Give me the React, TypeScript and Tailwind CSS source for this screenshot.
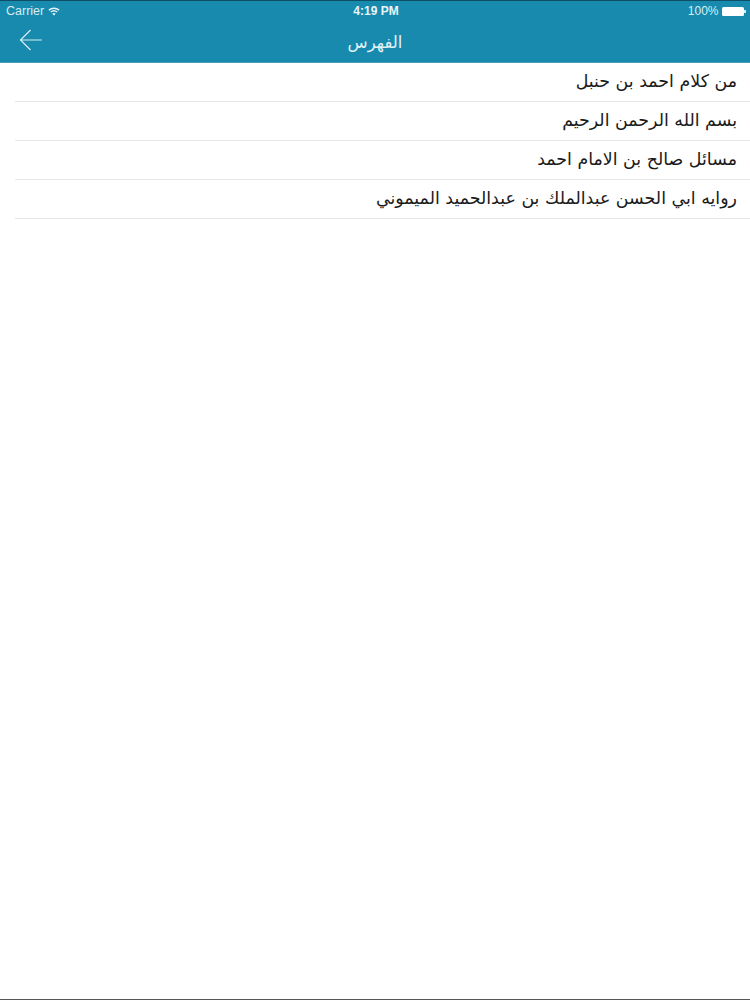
import React from "react";

const rows = [
  "من كلام احمد بن حنبل",
  "بسم الله الرحمن الرحيم",
  "مسائل صالح بن الامام احمد",
  "روايه ابي الحسن عبدالملك بن عبدالحميد الميموني",
];

const Wifi = () => (
  <svg width="12" height="9" viewBox="0 0 14 10" fill="none" stroke="#e4f2f7" strokeWidth="1.6">
    <path d="M1 3.4C4.4 .5 9.6 .5 13 3.4" />
    <path d="M3.2 5.6C5.4 3.8 8.6 3.8 10.8 5.6" />
    <path d="M7 9.6 5 7.5C6.2 6.6 7.8 6.6 9 7.5Z" fill="#e4f2f7" stroke="none" />
  </svg>
);

const Battery = () => (
  <div className="flex items-center">
    <div className="h-[9px] w-[22px] rounded-[1.5px] bg-white" />
    <div className="h-[3px] w-[1.5px] bg-[#d5ebf2]" />
  </div>
);

const App = () => {
  return (
    <div className="flex h-[1000px] flex-col bg-white font-['Liberation_Sans',sans-serif]">
      <header className="border-t border-b border-t-[#0f4f66] border-b-[#4a9fb8] bg-[#178aae]">
        <div className="flex h-[19px] items-center justify-between pl-[6px] pr-[4px] pt-[1px] text-[12.5px] text-[#d9edf3]">
          <div className="flex w-[100px] items-center gap-[4px]">
            <span>Carrier</span>
            <Wifi />
          </div>
          <span className="text-[12px] font-bold text-[#e9f5f8]">4:19 PM</span>
          <div className="flex w-[100px] items-center justify-end gap-[4px]">
            <span className="text-[12px]">100%</span>
            <Battery />
          </div>
        </div>
        <div className="relative flex h-[42px] items-center justify-center pt-[5px]">
          <svg className="absolute left-[19px] top-[9px]" width="24" height="22" viewBox="0 0 24 22" fill="none" stroke="#d5edf4" strokeWidth="1.2">
            <path d="M23 11H1.5M11.5 1 1.5 11l10 10" />
          </svg>
          <h1 dir="rtl" className="font-['DejaVu_Sans',sans-serif] text-[16.5px] font-normal text-[#e3f2f6]">
            الفهرس
          </h1>
        </div>
      </header>
      <main className="flex-1">
        {rows.map((row, idx) => (
          <div key={idx} className="ml-[15px] flex h-[39px] items-center justify-end border-b border-[#e6e6e6] pb-[2px] pr-[13px]">
            <span dir="rtl" className="font-['DejaVu_Sans',sans-serif] text-[17.4px] text-[#1a1a1a]">
              {row}
            </span>
          </div>
        ))}
      </main>
      <div className="h-px bg-[#555555]" />
    </div>
  );
};

export default App;
